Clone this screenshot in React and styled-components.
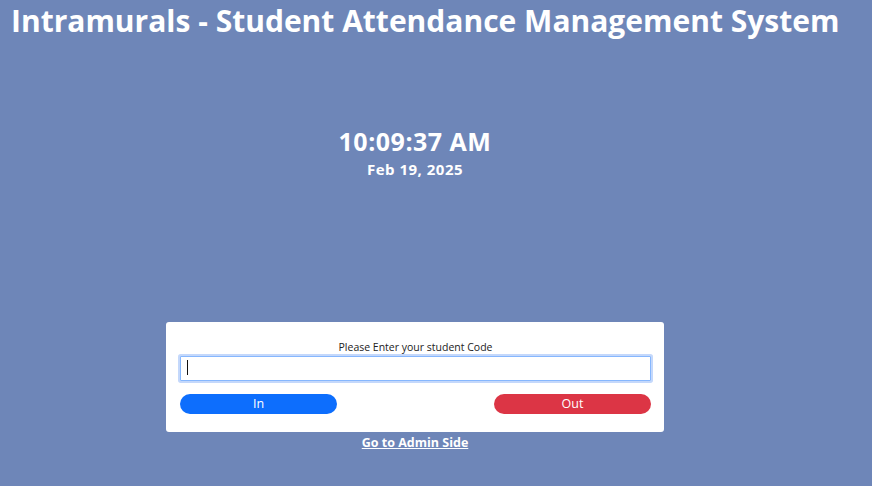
import React from "react";
import styled, { createGlobalStyle } from "styled-components";

const Global = createGlobalStyle`
  html, body { margin: 0; padding: 0; background: #6e86b8; }
  body { font-family: "Open Sans", "Noto Sans", sans-serif; color: #fff; }
  * { box-sizing: border-box; }
`;

const Page = styled.div`
  width: 100%;
  min-height: 486px;
  display: flex;
  flex-direction: column;
`;

const Title = styled.h1`
  margin: 0;
  padding: 0 0 0 11px;
  font-size: 30px;
  font-weight: 700;
  line-height: 41px;
  white-space: nowrap;
`;

const Main = styled.main`
  width: 830px;
  display: flex;
  flex-direction: column;
  align-items: center;
`;

const Clock = styled.div`
  margin-top: 83px;
  font-size: 25px;
  font-weight: 700;
  line-height: 34px;
  letter-spacing: 0.5px;
`;

const DateText = styled.div`
  margin-top: 1px;
  font-size: 15px;
  font-weight: 700;
  line-height: 21px;
  letter-spacing: 0.5px;
`;

const Card = styled.div`
  margin-top: 142px;
  width: 498px;
  background: #fff;
  border-radius: 3px;
  padding: 18px 13px 18px 14px;
  display: flex;
  flex-direction: column;
  align-items: stretch;
`;

const Label = styled.div`
  text-align: center;
  color: #222;
  font-size: 10.5px;
  line-height: 14px;
`;

const Input = styled.input`
  height: 25px;
  margin-top: 2px;
  border: 1px solid #86b7fe;
  box-shadow: 0 0 0 2px #c4d8fb;
  border-radius: 1px;
  outline: none;
  padding: 0 6px;
  font-size: 14px;
  font-family: inherit;
`;

const Caret = styled.span`
  position: absolute;
  left: 7px;
  top: 6px;
  width: 1px;
  height: 15px;
  background: #111;
`;

const InputWrap = styled.div`
  position: relative;
  display: flex;
  flex-direction: column;
`;

const Buttons = styled.div`
  margin-top: 13px;
  display: flex;
  justify-content: space-between;
`;

const Btn = styled.button`
  width: 157px;
  height: 20px;
  border: none;
  border-radius: 10px;
  background: ${(p) => p.$bg};
  color: #fff;
  font-family: "Open Sans", sans-serif;
  font-size: 12.5px;
  line-height: 20px;
  padding: 0;
`;

const AdminLink = styled.a`
  margin-top: 3px;
  color: #fff;
  font-size: 12.5px;
  font-weight: 700;
  text-decoration: underline;
  line-height: 16px;
`;

export default function App() {
  return (
    <>
      <Global />
      <Page>
        <Title>Intramurals - Student Attendance Management System</Title>
        <Main>
          <Clock>10:09:37 AM</Clock>
          <DateText>Feb 19, 2025</DateText>
          <Card>
            <Label>Please Enter your student Code</Label>
            <InputWrap>
              <Input type="text" />
              <Caret />
            </InputWrap>
            <Buttons>
              <Btn $bg="#0d6efd">In</Btn>
              <Btn $bg="#dc3545">Out</Btn>
            </Buttons>
          </Card>
          <AdminLink href="#">Go to Admin Side</AdminLink>
        </Main>
      </Page>
    </>
  );
}
